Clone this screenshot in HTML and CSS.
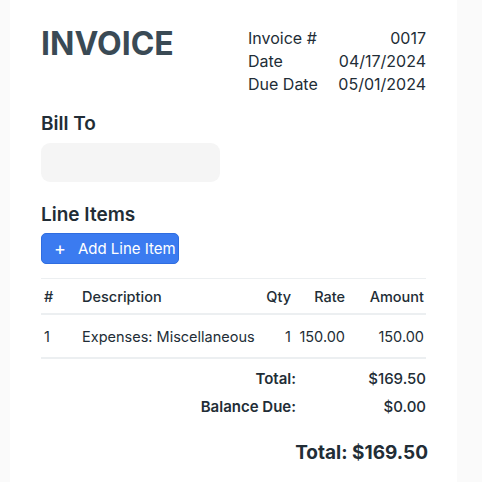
FILE: index.html
```html
<!DOCTYPE html>
<html>
<head>
<meta charset="utf-8">
<link rel="stylesheet" href="styles.css">
</head>
<body>
<div class="card">
  <div class="header">
    <h1 class="title">INVOICE</h1>
    <div class="meta">
      <div class="meta-row"><span>Invoice #</span><span>0017</span></div>
      <div class="meta-row"><span>Date</span><span>04/17/2024</span></div>
      <div class="meta-row"><span>Due Date</span><span>05/01/2024</span></div>
    </div>
  </div>
  <h2 class="section bill">Bill To</h2>
  <div class="billbox"></div>
  <h2 class="section items">Line Items</h2>
  <button class="add"><span class="plus">+</span>Add Line Item</button>
  <table class="tbl">
    <thead>
      <tr><th class="c-num">#</th><th class="c-desc">Description</th><th class="c-qty">Qty</th><th class="c-rate">Rate</th><th class="c-amt">Amount</th></tr>
    </thead>
    <tbody>
      <tr><td class="c-num">1</td><td class="c-desc">Expenses: Miscellaneous</td><td class="c-qty">1</td><td class="c-rate">150.00</td><td class="c-amt">150.00</td></tr>
    </tbody>
  </table>
  <div class="totals">
    <div class="trow"><span class="tl">Total:</span><span class="tv">$169.50</span></div>
    <div class="trow"><span class="tl">Balance Due:</span><span class="tv">$0.00</span></div>
  </div>
  <div class="grand">Total: $169.50</div>
</div>
</body>
</html>
```
FILE: styles.css
```css
html, body { margin: 0; padding: 0; }
body {
  background: #fafafa;
  font-family: Inter, "Noto Sans", sans-serif;
  color: #222d36;
  width: 482px;
  height: 482px;
  overflow: hidden;
}
.card {
  margin-left: 10px;
  width: 447px;
  height: 482px;
  background: #fff;
  box-sizing: border-box;
  padding: 24px 31px 0 31px;
}
.header {
  display: flex;
  justify-content: space-between;
  align-items: flex-start;
}
.title {
  margin: 0;
  font-size: 32px;
  font-weight: 700;
  color: #3a4a55;
  line-height: 40px;
}
.meta {
  width: 178px;
  font-size: 16px;
  line-height: 23px;
  padding-top: 3px;
}
.meta-row { display: flex; justify-content: space-between; }
.section {
  margin: 0;
  font-size: 19px;
  font-weight: 600;
  line-height: 24px;
}
.bill { margin-top: 16px; }
.billbox {
  margin-top: 7px;
  width: 179px;
  height: 39px;
  background: #f5f5f5;
  border-radius: 9px;
}
.items { margin-top: 21px; }
.add {
  margin-top: 6px;
  display: flex;
  align-items: center;
  height: 31px;
  width: 138px;
  padding: 0 0 0 12px;
  background: #3b7bf0;
  border: 1px solid #2f6de0;
  border-radius: 5px;
  color: #fff;
  font-family: inherit;
  font-size: 15px;
}
.plus { font-size: 18px; margin-right: 12px; font-weight: 400; }
.tbl {
  margin-top: 14px;
  width: 385px;
  border-collapse: collapse;
  font-size: 14.5px;
  table-layout: fixed;
}
.tbl thead tr { border-top: 1px solid #eceff1; border-bottom: 2px solid #eceff1; }
.tbl tbody tr { border-bottom: 2px solid #eceff1; }
.tbl th { font-weight: 500; height: 34px; padding: 0; white-space: nowrap; }
.tbl td { height: 42px; padding: 0; white-space: nowrap; }
.c-num { width: 41px; text-align: left; padding-left: 3px !important; box-sizing: border-box; }
.c-desc { text-align: left; }
.c-qty { text-align: right; width: 40px; }
.c-rate { text-align: right; width: 54px; }
.c-amt { text-align: right; width: 79px; padding-right: 2px !important; }
.totals { margin-top: 6px; font-size: 15px; }
.trow { display: flex; justify-content: flex-end; line-height: 28px; }
.tl { font-weight: 600; text-align: right; }
.tv { width: 130px; text-align: right; font-weight: 500; }
.grand {
  margin-top: 20px;
  text-align: right;
  font-size: 19px;
  font-weight: 700;
  margin-right: -2px;
}
```
